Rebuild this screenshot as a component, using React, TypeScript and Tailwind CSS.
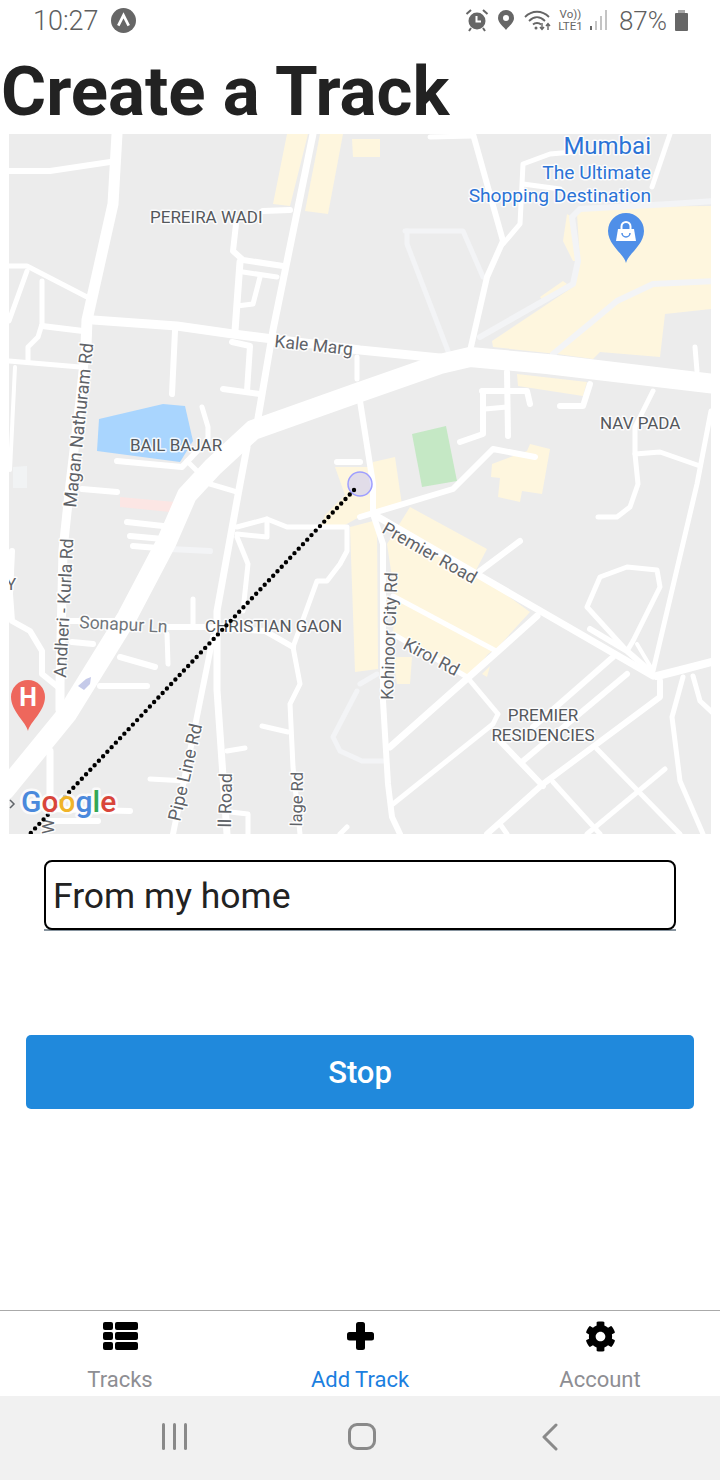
import { FaCog } from "react-icons/fa";

// map data, in page coordinates (the svg viewBox starts at the map's corner)
type Road = [number, string];

const whiteRoads: Road[] = [
  [20, "M5 790 67 714 127 617 167 541 187 495 213 467 253 430 360 392 440 364 470 357 547 364 715 384"],
  [9, "M93 320 177 326 233 334 273 339 360 350 440 358"],
  [11, "M117 134 113 204 87 320 86 345"],
  [9, "M87 334 80 400 70 484 63 550 60 684 60 710"],
  [6, "M10 171H50L110 162"],
  [5, "M87 297 27 266H9"],
  [5, "M27 271 9 321"],
  [5, "M42 281V324L38 337 28 347V361"],
  [6, "M42 326 83 331"],
  [5, "M9 361 80 367"],
  [4, "M15 367 10 470"],
  [7, "M313 134 273 330 257 424"],
  [7, "M247 447 240 484 217 611V690L227 834"],
  [6, "M213 637 190 751 173 834"],
  [6, "M236 224 233 251 243 260 283 266"],
  [6, "M263 211 290 210"],
  [7, "M240 262 235 331"],
  [5, "M243 272 277 277"],
  [5, "M260 277 253 304 237 306"],
  [6, "M232 342 250 346 247 391"],
  [6, "M223 389 260 394"],
  [6, "M175 331 172 394"],
  [5, "M202 407 208 427V441"],
  [6, "M117 461 182 467 197 451"],
  [5, "M187 461 197 471"],
  [6, "M337 462H360"],
  [5, "M357 357V379"],
  [6, "M82 489 117 492"],
  [6, "M127 522 163 526"],
  [6, "M130 536 163 539"],
  [6, "M133 546 170 549"],
  [5, "M210 484 237 492"],
  [5, "M237 527 267 519 287 527H347V551L340 564 327 581H317L293 647 300 684 290 704 293 767 300 834"],
  [5, "M267 519V537L237 534"],
  [5, "M237 537 248 564 243 611"],
  [6, "M67 621H120"],
  [6, "M167 627H205L265 631 293 647"],
  [6, "M12 551 10 594 12 621 30 631 42 651V674L58 687"],
  [5, "M193 599V624"],
  [5, "M167 634 168 664"],
  [6, "M120 657 155 667"],
  [6, "M100 686H147"],
  [6, "M72 642 93 644"],
  [7, "M50 751V794"],
  [5, "M262 726 288 732"],
  [5, "M227 751 245 748"],
  [5, "M150 779 187 781"],
  [5, "M230 812 248 814V834"],
  [6, "M50 809 130 811"],
  [6, "M50 821H98"],
  [5, "M347 827 340 834"],
  [6, "M473 134 503 241 487 277 470 351"],
  [5, "M503 244 520 224 523 164 550 154 573 152"],
  [5, "M523 184 560 189"],
  [5, "M670 134 652 187"],
  [5, "M430 137 473 136"],
  [6, "M507 372 508 436"],
  [6, "M482 391H527L530 404"],
  [6, "M483 391V434L460 442"],
  [5, "M485 409 507 407"],
  [6, "M590 384 583 406H560"],
  [5, "M695 347 697 371"],
  [5, "M653 391 635 427V454L638 484 630 507 617 517H598"],
  [5, "M635 454 660 452 700 466"],
  [5, "M711 411 697 484 653 671"],
  [6, "M360 517 453 489 493 449 535 457"],
  [6, "M360 401 373 484V514L383 544V701L388 784 392 817 400 834"],
  [7, "M373 514 480 576 653 676"],
  [8, "M657 676 677 671 715 661"],
  [6, "M480 571 520 541"],
  [7, "M537 616 497 652 390 747"],
  [5, "M393 596 498 652"],
  [5, "M393 634 467 677 498 714 493 724 393 804"],
  [6, "M500 741 543 786"],
  [6, "M627 674 523 761"],
  [6, "M613 657 533 727"],
  [6, "M590 629 627 651 650 671"],
  [5, "M587 607 600 577 627 567 657 570 660 587 633 641 627 651 587 607"],
  [4, "M637 644 653 671"],
  [6, "M660 681V697L543 784 487 834"],
  [5, "M597 749 680 834"],
  [5, "M553 782 600 834"],
  [5, "M665 769 587 834"],
  [5, "M683 677 672 717 680 781 703 834"],
  [5, "M693 676 700 701 715 715"],
  [5, "M500 824 507 834"],
];

const paleRoads: Road[] = [
  [5, "M405 231H463L483 277"],
  [5, "M407 231V244L448 351"],
  [6, "M715 201 670 204 580 209 572 217 578 261 573 284 480 337"],
  [6, "M715 281 653 284 617 301 553 354"],
  [5, "M357 691 333 737 340 751 362 761H383"],
  [5, "M360 684 377 674"],
  [6, "M170 549 210 551"],
];

const yellowAreas = [
  "287,134 308,134 290,206 273,204",
  "320,134 343,134 328,214 305,211",
  "352,139 380,139 380,157 353,157",
  "577,214 587,207 711,206 711,309 665,314 660,357 600,352 593,359 557,354 493,347 492,341 573,287 580,261",
  "540,297 563,281 567,284 543,301",
  "567,214 563,241 573,261 578,261 572,217",
  "517,374 587,382 583,396 518,386",
  "492,464 527,451 530,444 550,449 542,494 522,491 520,502 498,497 500,478 491,477",
  "335,467 373,467 373,462 395,457 402,505 372,510 345,525 320,527 325,515 345,495",
  "350,527 377,520 378,669 355,672",
  "393,657 412,657 410,684 397,684",
  "387,544 410,507 487,549 475,572 530,612 498,647 488,654 470,677 460,674 393,634 395,597",
  "482,674 490,666 487,677",
];

type Label = {
  text: string;
  x: number;
  y: number;
  size?: number;
  rotate?: number;
  anchor?: "start" | "middle" | "end";
  color?: string;
};

const roadColor = "#5f6368";

const labels: Label[] = [
  { text: "PEREIRA WADI", x: 150, y: 223 },
  { text: "Kale Marg", x: 274, y: 347, size: 17.5, rotate: 6, color: roadColor },
  { text: "Magan Nathuram Rd", x: 76, y: 508, size: 18, rotate: -84, color: roadColor },
  { text: "Andheri - Kurla Rd", x: 66, y: 678, size: 17.6, rotate: -87, color: roadColor },
  { text: "BAIL BAJAR", x: 130, y: 451 },
  { text: "NAV PADA", x: 600, y: 429 },
  { text: "Premier Road", x: 381, y: 532, size: 17.5, rotate: 29.6, color: roadColor },
  { text: "Kohinoor City Rd", x: 393, y: 700, size: 17.3, rotate: -88, color: roadColor },
  { text: "Kirol Rd", x: 402, y: 648, size: 17.5, rotate: 28, color: roadColor },
  { text: "PREMIER", x: 543, y: 721, anchor: "middle" },
  { text: "RESIDENCIES", x: 543, y: 741, anchor: "middle" },
  { text: "Sonapur Ln", x: 79, y: 628, size: 17.5, rotate: 3, color: "#70757a" },
  { text: "CHRISTIAN GAON", x: 205, y: 632 },
  { text: "Pipe Line Rd", x: 180, y: 822, size: 18, rotate: -77, color: roadColor },
  { text: "ll Road", x: 232, y: 773, size: 18, rotate: -89, anchor: "end", color: roadColor },
  { text: "lage Rd", x: 303, y: 772, size: 16.5, rotate: -89, anchor: "end", color: roadColor },
  { text: "Y", x: 6, y: 590, color: roadColor },
  { text: "W", x: 54, y: 834, rotate: -90, color: roadColor },
  { text: "Mumbai", x: 651, y: 154, size: 24, anchor: "end", color: "#2b73d6" },
  { text: "The Ultimate", x: 651, y: 179, size: 19.2, anchor: "end", color: "#2b73d6" },
  { text: "Shopping Destination", x: 651, y: 202, size: 19.2, anchor: "end", color: "#2b73d6" },
];

const MapLabel = ({ text, x, y, size = 17, rotate = 0, anchor = "start", color = "#55585c" }: Label) => (
  <text
    x={x}
    y={y}
    fontSize={size}
    textAnchor={anchor}
    fill={color}
    stroke="#ffffff"
    strokeOpacity={0.85}
    strokeWidth={3}
    strokeLinejoin="round"
    transform={rotate ? `rotate(${rotate} ${x} ${y})` : undefined}
    className="[paint-order:stroke] font-['Roboto',sans-serif]"
  >
    {text}
  </text>
);

const MapView = () => (
  <svg viewBox="9 134 702 700" className="block w-[702px] h-[700px] bg-[#ececec] mx-[9px]">
    <polygon points="99,419 163,404 185,406 193,441 180,462 97,451" fill="#a9d5fe" />
    <polygon points="412,434 446,426 457,481 422,487" fill="#c5e8c5" />
    <polygon points="120,497 175,502 170,512 120,507" fill="#fce6e4" />
    <polygon points="13,467 27,466 27,488 13,488" fill="#f1f3f4" />
    {yellowAreas.map((points) => (
      <polygon key={points} points={points} fill="#fef6de" />
    ))}
    <g fill="none" strokeLinecap="round" strokeLinejoin="round">
      {paleRoads.map(([width, d]) => (
        <path key={d} d={d} stroke="#f3f4f6" strokeWidth={width} />
      ))}
      {whiteRoads.map(([width, d]) => (
        <path key={d} d={d} stroke="#ffffff" strokeWidth={width} />
      ))}
    </g>
    <path d="M84 690 78 686 86 679 91 677 90 684 Z" fill="#c5cae9" />

    {labels.map((label) => (
      <MapLabel key={label.text} {...label} />
    ))}
    <path d="M10 800 14 804 10 808" fill="none" stroke="#5f6368" strokeWidth={1.5} />

    {/* shopping pin */}
    <path d="M626 263C624 254 608 245 608 231A18 18 0 0 1 644 231C644 245 628 254 626 263Z" fill="#4f8fe8" />
    <path d="M618 229H634L636 241H616Z" fill="#ffffff" />
    <path d="M621.500 229V226.500A4.500 4.500 0 0 1 630.500 226.500V229" fill="none" stroke="#ffffff" strokeWidth={2} />
    <path d="M622 233A4 4 0 0 0 630 233" fill="none" stroke="#4f8fe8" strokeWidth={1.5} />

    {/* hospital pin */}
    <path d="M28 731C26 722 11 711 11 697A17 17 0 0 1 45 697C45 711 30 722 28 731Z" fill="#ee675c" />
    <text x={28} y={706} fontSize={25} fontWeight={700} fill="#ffffff" textAnchor="middle" className="font-['Roboto',sans-serif]">
      H
    </text>

    {/* recorded track */}
    <circle cx={360} cy={484} r={12} fill="#9e9eff" fillOpacity={0.3} stroke="#9e9eff" strokeWidth={1.5} />
    <path d="M354 490 26 838" fill="none" stroke="#000000" strokeWidth={4.4} strokeLinecap="round" strokeDasharray="0 6.2" />

    {/* logo */}
    <text
      x={21}
      y={812}
      fontSize={30}
      fontWeight={500}
      stroke="#ffffff"
      strokeOpacity={0.8}
      strokeWidth={5}
      strokeLinejoin="round"
      className="[paint-order:stroke] font-['Roboto',sans-serif]"
    >
      <tspan fill="#4a89dc">G</tspan>
      <tspan fill="#d9453a">o</tspan>
      <tspan fill="#f0b429">o</tspan>
      <tspan fill="#4a89dc">g</tspan>
      <tspan fill="#34a853">l</tspan>
      <tspan fill="#d9453a">e</tspan>
    </text>
  </svg>
);

const StatusBar = () => (
  <div className="h-[40px] flex items-center pl-[33px] pr-[32px] text-[#5f5f5f] font-['Roboto',sans-serif]">
    <span className="mt-[2px] text-[27px] font-light leading-none">10:27</span>
    <svg viewBox="0 0 24 24" className="w-[25px] h-[25px] ml-[12px]">
      <circle cx={12} cy={12} r={12} fill="#666666" />
      <path d="M7 17 12 7 17 17" fill="none" stroke="#ffffff" strokeWidth={2.6} />
    </svg>
    <div className="flex-1" />
    {/* alarm */}
    <svg viewBox="0 0 24 24" className="w-[24px] h-[24px]">
      <circle cx={12} cy={13} r={8.5} fill="#666666" />
      <path d="M11.500 8V13.500H16" fill="none" stroke="#ffffff" strokeWidth={2} />
      <path d="M1.500 6 6 2M22.500 6 18 2M6 20 4 23M18 20 20 23" fill="none" stroke="#666666" strokeWidth={2} />
    </svg>
    {/* location */}
    <svg viewBox="0 0 16 20" className="w-[16px] h-[20px] ml-[9px]">
      <path fillRule="evenodd" d="M8 0A8 8 0 0 1 16 8C16 13 10 17 8 20 6 17 0 13 0 8A8 8 0 0 1 8 0ZM8 5A3 3 0 1 0 8 11 3 3 0 0 0 8 5Z" fill="#666666" />
    </svg>
    {/* wifi with arrows */}
    <svg viewBox="0 0 28 22" className="w-[28px] h-[22px] ml-[10px]">
      <path d="M1 8C8 1 18 1 25 8M5 12C10 7 16 7 21 12M9 15.500C11 13.500 15 13.500 17 15.500" fill="none" stroke="#666666" strokeWidth={1.8} />
      <circle cx={12} cy={19} r={1.500} fill="#666666" />
      <path d="M18 14V20M16 18 18 20.500 20 18M24 21V15M22 17 24 14.500 26 17" fill="none" stroke="#666666" strokeWidth={1.4} />
    </svg>
    <div className="ml-[5px] w-[27px] flex flex-col items-center text-[#666666] text-[11.500px] leading-[12px]">
      <span>Vo))</span>
      <span>LTE1</span>
    </div>
    {/* signal */}
    <div className="ml-[6px] h-[20px] flex items-end gap-[3px]">
      <div className="w-[2px] h-[4px] bg-[#666666]" />
      <div className="w-[2px] h-[9px] bg-[#c4c4c4]" />
      <div className="w-[2px] h-[14px] bg-[#c4c4c4]" />
      <div className="w-[2px] h-[20px] bg-[#c4c4c4]" />
    </div>
    <span className="mt-[2px] ml-[12px] text-[26px] font-light leading-none">87%</span>
    {/* battery */}
    <div className="ml-[8px] w-[13px] h-[21px] flex flex-col items-center">
      <div className="w-[7px] h-[3px] bg-[#a8a8a8]" />
      <div className="w-[13px] h-[18px] bg-[#666666] rounded-[1px]" />
    </div>
  </div>
);

const Tab = ({ label, active, children }: { label: string; active?: boolean; children: React.ReactNode }) => (
  <div className="flex-1 flex flex-col items-center">
    <div className="h-[36px] flex items-center justify-center text-black">{children}</div>
    <span className={`mt-[12px] text-[22px] leading-[28px] font-['Roboto',sans-serif] ${active ? "text-[#1c7fe0]" : "text-[#8e8e93]"}`}>
      {label}
    </span>
  </div>
);

// th-list glyph, squashed the way the screenshot has it
const ListIcon = () => (
  <svg viewBox="0 0 35 28" className="w-[35px] h-[28px]" fill="#000000">
    <rect x={0} y={0} width={10} height={8} rx={2} />
    <rect x={12} y={0} width={23} height={8} rx={2} />
    <rect x={0} y={10} width={10} height={8} rx={2} />
    <rect x={12} y={10} width={23} height={8} rx={2} />
    <rect x={0} y={20} width={10} height={8} rx={2} />
    <rect x={12} y={20} width={23} height={8} rx={2} />
  </svg>
);

const PlusIcon = () => (
  <svg viewBox="0 0 27 28" className="w-[27px] h-[28px]" fill="#000000">
    <rect x={9} y={0} width={9} height={28} rx={2.500} />
    <rect x={0} y={10} width={27} height={8.500} rx={2.500} />
  </svg>
);

export default function App() {
  return (
    <div className="w-[720px] h-[1480px] bg-white flex flex-col overflow-hidden font-['Roboto',sans-serif]">
      <StatusBar />

      <h1 className="h-[94px] pl-[1px] text-[69px] leading-[103px] font-bold text-[#222222] whitespace-nowrap">Create a Track</h1>

      <MapView />

      {/* Track name */}
      <div className="mt-[26px] mx-[44px] border-b-[2px] border-[#86939e]">
        <div className="h-[70px] -mb-[1px] border-2 border-black rounded-[8px] pl-[7px] pt-[3px] flex items-center text-[35.500px] text-[#222222]">
          From my home
        </div>
      </div>

      {/* Record button */}
      <button className="mt-[104px] mx-[26px] h-[74px] pt-[2px] bg-[#2089dc] rounded-[5px] text-white text-[31px] font-medium">Stop</button>

      <div className="flex-1" />

      {/* Tabs */}
      <div className="h-[86px] border-t border-[#aaaaaa] pt-[7px] flex">
        <Tab label="Tracks">
          <ListIcon />
        </Tab>
        <Tab label="Add Track" active>
          <PlusIcon />
        </Tab>
        <Tab label="Account">
          <FaCog size={31} />
        </Tab>
      </div>

      {/* Android navigation */}
      <div className="h-[84px] bg-[#f1f1f1] flex items-start pt-[27px]">
        <div className="w-[348px] pl-[162px] flex gap-[8px]">
          <div className="w-[3px] h-[27px] bg-[#8a8a8a] rounded-full" />
          <div className="w-[3px] h-[27px] bg-[#8a8a8a] rounded-full" />
          <div className="w-[3px] h-[27px] bg-[#8a8a8a] rounded-full" />
        </div>
        <div className="w-[28px] h-[27px] border-[3px] border-[#8a8a8a] rounded-[9px]" />
        <svg viewBox="0 0 18 28" className="w-[18px] h-[28px] ml-[165px]">
          <path d="M15 2 3 14 15 26" fill="none" stroke="#8a8a8a" strokeWidth={3} strokeLinecap="round" strokeLinejoin="round" />
        </svg>
      </div>
    </div>
  );
}
